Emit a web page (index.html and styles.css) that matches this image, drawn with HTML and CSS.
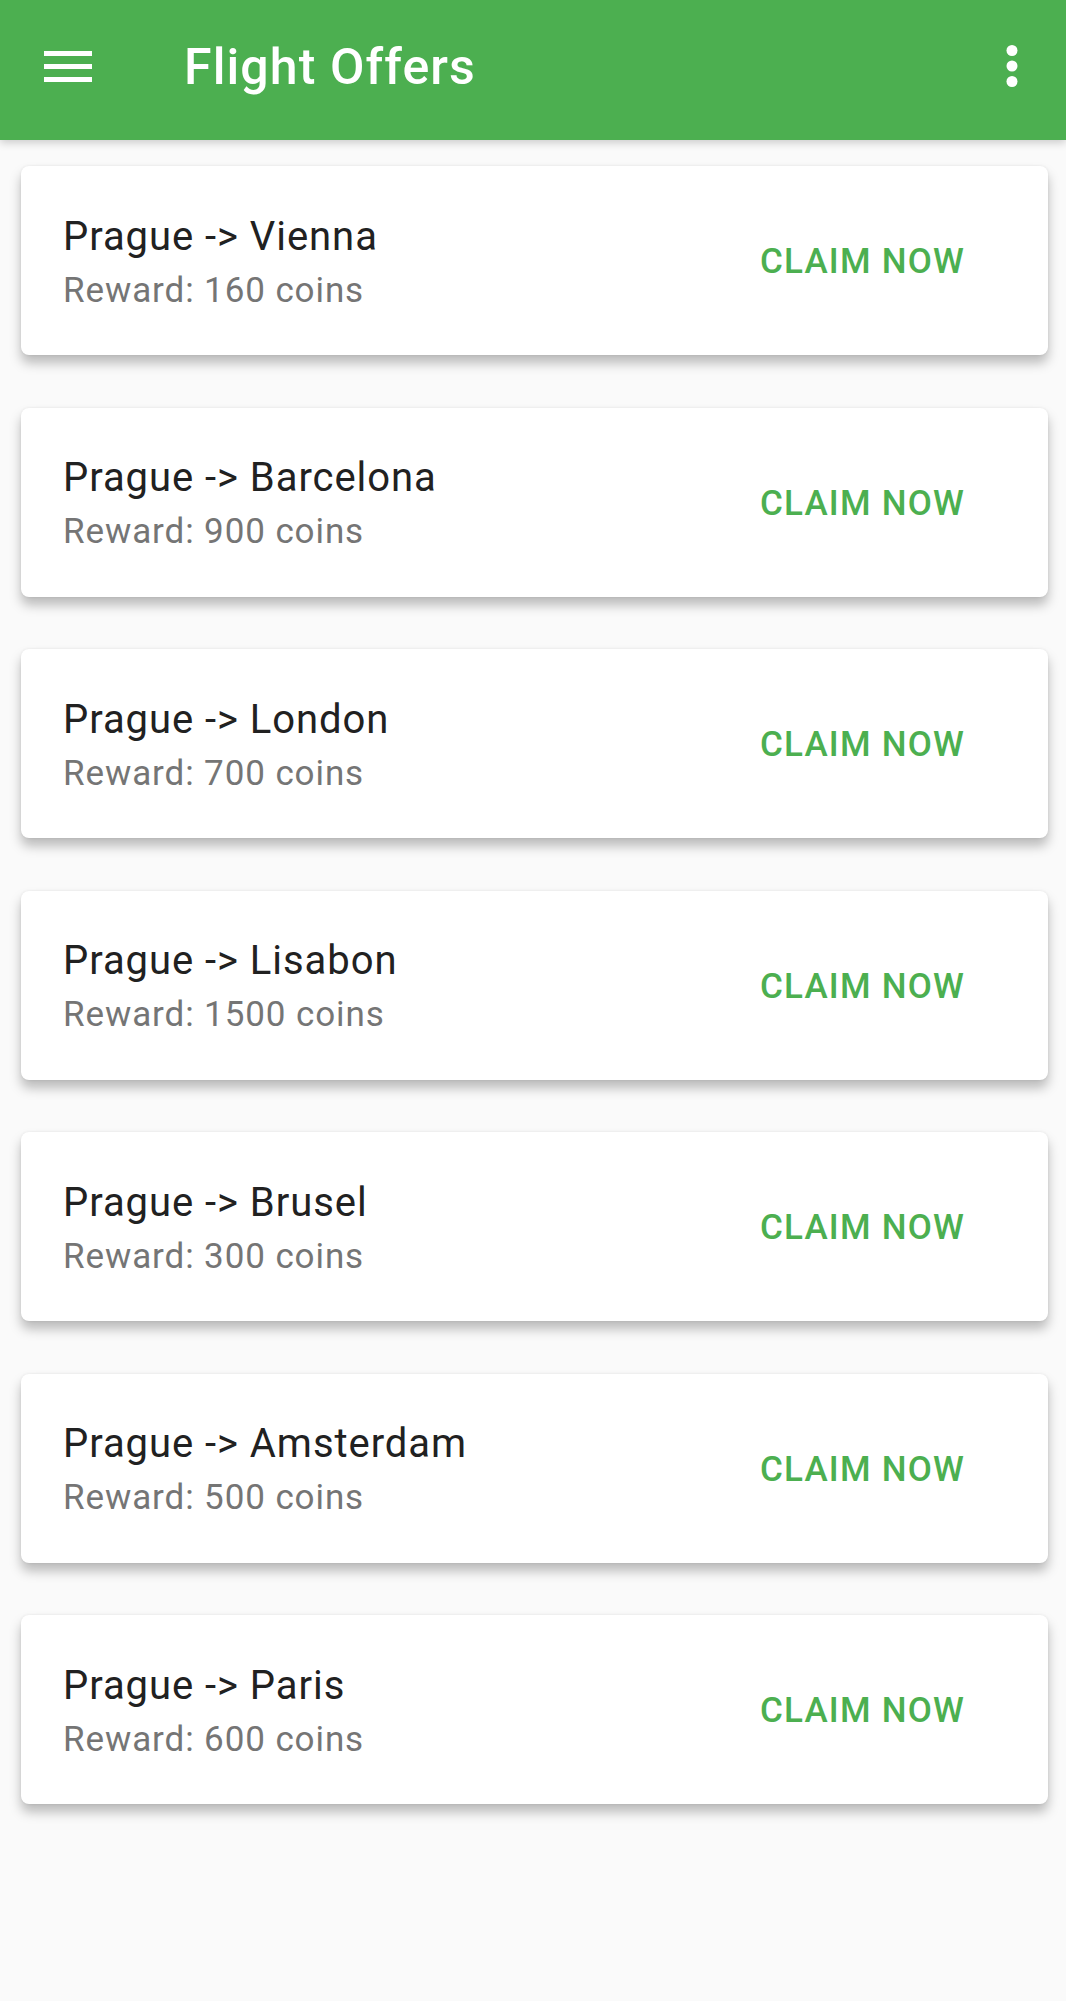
FILE: index.html
```html
<!DOCTYPE html>
<html lang="en">
<head>
<meta charset="utf-8">
<title>Flight Offers</title>
<link rel="stylesheet" href="styles.css">
</head>
<body>
<header class="toolbar">
  <button class="icon-btn menu-btn" aria-label="Menu">
    <svg width="48" height="31" viewBox="0 0 48 31"><rect x="0" y="0" width="48" height="5" fill="#fff"/><rect x="0" y="13" width="48" height="5" fill="#fff"/><rect x="0" y="26" width="48" height="5" fill="#fff"/></svg>
  </button>
  <h1 class="toolbar-title">Flight Offers</h1>
  <button class="icon-btn more-btn" aria-label="More">
    <svg width="12" height="43" viewBox="0 0 12 43"><circle cx="6" cy="5.5" r="5.5" fill="#fff"/><circle cx="6" cy="21" r="5.5" fill="#fff"/><circle cx="6" cy="36.5" r="5.5" fill="#fff"/></svg>
  </button>
</header>
<main class="list">
  <div class="card"><div class="card-text"><div class="route">Prague -&gt; Vienna</div><div class="reward">Reward: 160 coins</div></div><button class="claim">CLAIM NOW</button></div>
  <div class="card"><div class="card-text"><div class="route">Prague -&gt; Barcelona</div><div class="reward">Reward: 900 coins</div></div><button class="claim">CLAIM NOW</button></div>
  <div class="card"><div class="card-text"><div class="route">Prague -&gt; London</div><div class="reward">Reward: 700 coins</div></div><button class="claim">CLAIM NOW</button></div>
  <div class="card"><div class="card-text"><div class="route">Prague -&gt; Lisabon</div><div class="reward">Reward: 1500 coins</div></div><button class="claim">CLAIM NOW</button></div>
  <div class="card"><div class="card-text"><div class="route">Prague -&gt; Brusel</div><div class="reward">Reward: 300 coins</div></div><button class="claim">CLAIM NOW</button></div>
  <div class="card"><div class="card-text"><div class="route">Prague -&gt; Amsterdam</div><div class="reward">Reward: 500 coins</div></div><button class="claim">CLAIM NOW</button></div>
  <div class="card"><div class="card-text"><div class="route">Prague -&gt; Paris</div><div class="reward">Reward: 600 coins</div></div><button class="claim">CLAIM NOW</button></div>
</main>
</body>
</html>
```

FILE: styles.css
```css
* { box-sizing: border-box; }
html, body {
  margin: 0;
  padding: 0;
  background: #fafafa;
  font-family: Roboto, "Liberation Sans", sans-serif;
  width: 1066px;
  min-height: 2001px;
}
.toolbar {
  height: 140px;
  background: #4caf50;
  display: flex;
  align-items: center;
  position: relative;
  z-index: 2;
  box-shadow: 0 3px 8px rgba(0, 0, 0, 0.18);
}
.icon-btn {
  background: none;
  border: 0;
  padding: 0;
  display: flex;
  align-items: center;
  justify-content: center;
}
.menu-btn {
  margin-left: 44px;
  width: 48px;
  height: 31px;
  margin-top: -8px;
}
.toolbar-title {
  margin: -5px 0 0 92px;
  font-size: 50px;
  font-weight: 500;
  color: #fff;
  flex: 1;
  line-height: 59px;
  letter-spacing: 1.1px;
}
.more-btn {
  width: 12px;
  height: 43px;
  margin-right: 48px;
  margin-top: -8px;
}
.list {
  padding: 26px 18px 0 21px;
  display: flex;
  flex-direction: column;
  gap: 52.5px;
}
.card {
  height: 189px;
  background: #fff;
  border-radius: 8px;
  display: flex;
  align-items: center;
  padding: 2px 83px 0 42px;
  box-shadow: 0 8px 12px rgba(0, 0, 0, 0.26), 0 0 3px rgba(0, 0, 0, 0.08);
}
.card-text {
  flex: 1;
}
.route {
  font-size: 40px;
  line-height: 47px;
  color: #212121;
  letter-spacing: 0.95px;
}
.reward {
  font-size: 35px;
  line-height: 41px;
  color: #757575;
  margin-top: 10px;
  letter-spacing: 0.9px;
}
.claim {
  background: none;
  border: 0;
  padding: 0;
  font-family: Roboto, "Liberation Sans", sans-serif;
  font-size: 35px;
  font-weight: 500;
  color: #4caf50;
  letter-spacing: 1.2px;
}
```
